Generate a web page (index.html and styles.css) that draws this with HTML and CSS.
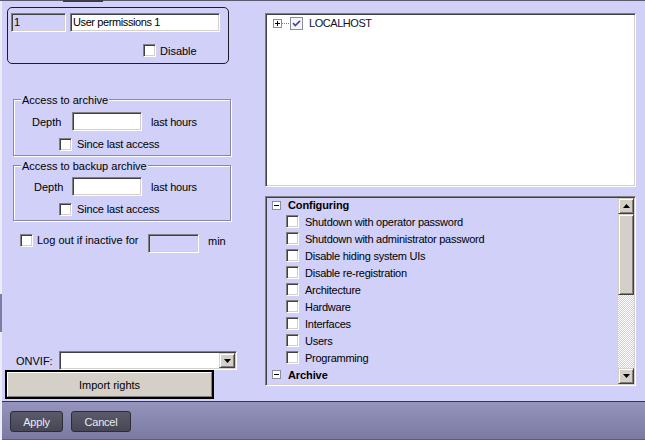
FILE: index.html
```html
<!DOCTYPE html>
<html>
<head>
<meta charset="utf-8">
<link rel="stylesheet" href="styles.css">
</head>
<body>
<div class="topline"><span class="tab"></span></div>
<div class="frame">
  <div class="main">
    <span class="splitter"></span>
    <div class="left">
      <div class="panel">
        <div class="ids">
          <div class="input id-in disabled">1</div>
          <div class="input name-in">User permissions 1</div>
        </div>
        <div class="cbrow disable-row"><span class="cb"></span><span class="lbl">Disable</span></div>
      </div>

      <div class="group g1">
        <div class="legend">Access to archive</div>
        <div class="depth-row d1"><span class="dl">Depth</span><span class="input depth-in"></span><span class="lh">last hours</span></div>
        <div class="cbrow since"><span class="cb"></span><span class="lbl">Since last access</span></div>
      </div>

      <div class="group g2">
        <div class="legend">Access to backup archive</div>
        <div class="depth-row d2"><span class="dl">Depth</span><span class="input depth-in"></span><span class="lh">last hours</span></div>
        <div class="cbrow since"><span class="cb"></span><span class="lbl">Since last access</span></div>
      </div>

      <div class="logout">
        <span class="cb"></span>
        <span class="lo-lbl">Log out if inactive for</span>
        <span class="input min-in disabled"></span>
        <span class="min-lbl">min</span>
      </div>

      <div class="onvif">
        <span class="onvif-lbl">ONVIF:</span>
        <div class="input combo">
          <span class="raised dd"><svg width="7" height="4" viewBox="0 0 7 4"><polygon points="0,0 7,0 3.5,4" fill="#000"/></svg></span>
        </div>
      </div>

      <div class="import"><div class="import-face">Import rights</div></div>
    </div>

    <div class="right">
      <div class="tree sunken">
        <div class="tree-row">
          <svg class="pm" width="9" height="9" viewBox="0 0 9 9"><rect x="0.5" y="0.5" width="8" height="8" fill="#fff" stroke="#8c8c9c"/><path d="M2 4.5H7M4.5 2V7" stroke="#000" stroke-width="1"/></svg>
          <span class="dots"></span>
          <svg class="tcb" width="13" height="13" viewBox="0 0 13 13"><rect x="0.5" y="0.5" width="12" height="12" fill="#f6f6fa" stroke="#8a8aa8"/><path d="M3 6.2L5.3 8.6L10 3.8" fill="none" stroke="#4848a8" stroke-width="1.7"/></svg>
          <span class="host">LOCALHOST</span>
        </div>
      </div>

      <div class="list sunken">
        <div class="items">
          <div class="cat first"><svg class="pm" width="9" height="9" viewBox="0 0 9 9"><rect x="0.5" y="0.5" width="8" height="8" fill="#fff" stroke="#8c8c9c"/><path d="M2 4.5H7" stroke="#000"/></svg><span class="cat-lbl">Configuring</span></div>
          <div class="item"><span class="cb"></span><span class="it-lbl">Shutdown with operator password</span></div>
          <div class="item"><span class="cb"></span><span class="it-lbl">Shutdown with administrator password</span></div>
          <div class="item"><span class="cb"></span><span class="it-lbl">Disable hiding system UIs</span></div>
          <div class="item"><span class="cb"></span><span class="it-lbl">Disable re-registration</span></div>
          <div class="item"><span class="cb"></span><span class="it-lbl">Architecture</span></div>
          <div class="item"><span class="cb"></span><span class="it-lbl">Hardware</span></div>
          <div class="item"><span class="cb"></span><span class="it-lbl">Interfaces</span></div>
          <div class="item"><span class="cb"></span><span class="it-lbl">Users</span></div>
          <div class="item"><span class="cb"></span><span class="it-lbl">Programming</span></div>
          <div class="cat"><svg class="pm" width="9" height="9" viewBox="0 0 9 9"><rect x="0.5" y="0.5" width="8" height="8" fill="#fff" stroke="#8c8c9c"/><path d="M2 4.5H7" stroke="#000"/></svg><span class="cat-lbl">Archive</span></div>
        </div>
        <div class="vscroll">
          <span class="raised sbtn"><svg width="7" height="4" viewBox="0 0 7 4"><polygon points="3.5,0 7,4 0,4" fill="#000"/></svg></span>
          <span class="raised thumb"></span>
          <span class="track"></span>
          <span class="raised sbtn"><svg width="7" height="4" viewBox="0 0 7 4"><polygon points="0,0 7,0 3.5,4" fill="#000"/></svg></span>
        </div>
      </div>
    </div>
  </div>

  <div class="bottom">
    <span class="dbtn apply">Apply</span>
    <span class="dbtn cancel">Cancel</span>
  </div>
</div>
</body>
</html>
```

FILE: styles.css
```css
* { box-sizing: border-box; }
html, body { margin: 0; padding: 0; }
body {
  width: 645px;
  height: 440px;
  overflow: hidden;
  background: #d0d0f8;
  font-family: "Liberation Sans", Arial, sans-serif;
  font-size: 11px;
  color: #000;
  display: flex;
  flex-direction: column;
}

.topline { height: 1px; background: #5a5a6e; flex: none; }
.topline .tab { display: block; margin-left: 63px; width: 40px; height: 2px; background: #3c3c4c; }

.frame {
  flex: 1;
  display: flex;
  flex-direction: column;
  border-left: 2px solid #ececf4;
}

.main {
  height: 400px;
  display: flex;
  position: relative;
}
.splitter {
  position: absolute;
  left: -2px;
  top: 293px;
  width: 2px;
  height: 38px;
  background: #7c7ca0;
}

/* left column */
.left {
  width: 256px;
  display: flex;
  flex-direction: column;
  align-items: flex-start;
}

.input {
  display: block;
  background: #fff;
  border: 1px solid;
  border-color: #808080 #ffffff #ffffff #808080;
  box-shadow: inset 1px 1px #404040, inset -1px -1px #d4d0c8;
  height: 19px;
  padding: 1px 1px 1px 2px;
  line-height: 15px;
  white-space: nowrap;
  overflow: hidden;
}
.input.disabled { background: #d0d0f8; }

.cb {
  display: block;
  flex: none;
  width: 13px;
  height: 13px;
  background: #fff;
  border: 1px solid;
  border-color: #808080 #ffffff #ffffff #808080;
  box-shadow: inset 1px 1px #404040, inset -1px -1px #d4d0c8;
}

.panel {
  margin: 6px 0 0 5px;
  width: 222px;
  height: 57px;
  border: 1px solid #1c1c2c;
  border-radius: 5px;
  padding: 5px 3px;
}
.ids { display: flex; gap: 4px; }
.id-in { width: 55px; }
.name-in { width: 150px; letter-spacing: -0.4px; }

.cbrow {
  display: flex;
  align-items: center;
  height: 13px;
  line-height: 13px;
}
.cbrow .lbl { margin-left: 5px; }
.disable-row { margin: 12px 0 0 132px; }
.disable-row .lbl { margin-left: 4px; margin-top: 1px; }

.group {
  margin-left: 11px;
  width: 218px;
  border: 1px solid #8888a0;
  box-shadow: inset 1px 1px #fff, 1px 1px #fff;
  padding-bottom: 4px;
}
.g1 { margin-top: 35px; }
.g2 { margin-top: 9px; }
.legend {
  margin: -6px 0 0 7px;
  padding: 0 1px;
  height: 13px;
  line-height: 13px;
  background: #d0d0f8;
  width: max-content;
}
.depth-row {
  display: flex;
  align-items: center;
  height: 19px;
}
.d1 { margin-top: 5px; padding-left: 18px; }
.d1 .dl { width: 40px; }
.d2 { margin-top: 4px; padding-left: 20px; }
.d2 .dl { width: 38px; }
.depth-in { width: 70px; }
.lh { margin-left: 9px; letter-spacing: -0.2px; }
.since { margin: 7px 0 0 45px; letter-spacing: -0.15px; }

.logout {
  margin: 13px 0 0 18px;
  display: flex;
  align-items: flex-start;
  height: 19px;
  line-height: 13px;
}
.lo-lbl { margin-left: 4px; width: 111px; }
.min-in { width: 51px; }
.min-lbl { margin-left: 9px; margin-top: 1px; }

.onvif {
  margin: 98px 0 0 14px;
  display: flex;
  align-items: center;
  height: 19px;
}
.onvif-lbl { width: 43px; }
.combo {
  width: 178px;
  display: flex;
  justify-content: flex-end;
  padding: 1px;
}

.raised {
  background: #d4d0c8;
  border: 1px solid;
  border-color: #d4d0c8 #404040 #404040 #d4d0c8;
  box-shadow: inset 1px 1px #fff, inset -1px -1px #808080;
}
.dd {
  width: 16px;
  height: 15px;
  display: flex;
  align-items: center;
  justify-content: center;
}
.dd svg { display: block; }

.import {
  margin-left: 3px;
  width: 209px;
  height: 29px;
  border: 2px solid #000;
}
.import-face {
  height: 100%;
  background: #d4d0c8;
  border: 1px solid;
  border-color: #ffffff #808080 #808080 #ffffff;
  display: flex;
  align-items: center;
  justify-content: center;
}

/* right column */
.right {
  width: 371px;
  margin-left: 7px;
  display: flex;
  flex-direction: column;
}
.sunken {
  border: 1px solid;
  border-color: #808080 #ffffff #ffffff #808080;
  box-shadow: inset 1px 1px #404040, inset -1px -1px #d4d0c8;
}
.tree {
  margin-top: 12px;
  height: 174px;
  background: #fff;
  padding: 2px 0 0 7px;
}
.tree-row {
  display: flex;
  align-items: center;
  height: 14px;
}
.pm { display: block; flex: none; }
.dots {
  width: 8px;
  height: 1px;
  margin: 1px 0 0 0;
  background: repeating-linear-gradient(90deg, #808080 0 1px, transparent 1px 2px);
}
.tcb { display: block; }
.host { margin-left: 6px; letter-spacing: -0.45px; color: #101030; }

.list {
  margin-top: 9px;
  height: 190px;
  display: flex;
}
.items { flex: 1; margin-top: -1px; }
.cat, .item {
  display: flex;
  align-items: center;
  height: 17px;
}
.cat { padding-left: 6px; }
.cat.first .pm { margin-top: 1px; }
.cat-lbl { margin-left: 7px; font-weight: bold; letter-spacing: -0.1px; }
.item { padding-left: 20px; }
.it-lbl { margin-left: 6px; letter-spacing: -0.25px; }

.vscroll {
  width: 16px;
  margin: 1px 1px 1px 0;
  display: flex;
  flex-direction: column;
}
.sbtn {
  height: 16px;
  display: flex;
  align-items: center;
  justify-content: center;
}
.sbtn svg { display: block; }
.thumb { height: 81px; }
.track {
  flex: 1;
  background: repeating-conic-gradient(#ffffff 0 25%, #d4d0c8 0 50%) 0 0 / 2px 2px;
}

/* bottom bar */
.bottom {
  height: 39px;
  border-top: 1px solid #34344a;
  border-bottom: 1px solid #5c5c78;
  background: linear-gradient(#9494bc, #7a7aa2);
  display: flex;
  align-items: flex-start;
  padding: 9px 0 0 8px;
  gap: 8px;
}
.dbtn {
  height: 21px;
  border: 1px solid #2c2c3a;
  border-radius: 3px;
  background: linear-gradient(#5a5a6a, #464655);
  color: #ececf4;
  display: flex;
  align-items: center;
  justify-content: center;
  letter-spacing: -0.2px;
}
.apply { width: 53px; }
.cancel { width: 60px; }
```
